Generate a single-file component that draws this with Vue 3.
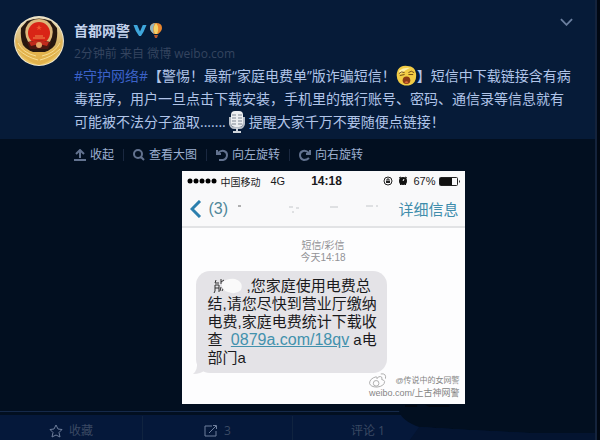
<template>
  <div class="card">
    <header class="post">
      <a href="#" class="avatar" aria-label="首都网警">
        <svg viewBox="0 0 50 50">
          <defs>
            <linearGradient id="gold" x1="0" y1="0" x2="0" y2="1">
              <stop offset="0" stop-color="#e9dfc0" />
              <stop offset="0.55" stop-color="#d9b566" />
              <stop offset="1" stop-color="#f0c860" />
            </linearGradient>
          </defs>
          <circle cx="25" cy="25" r="25" fill="#f1e8cf" />
          <circle cx="25" cy="25" r="24" fill="url(#gold)" />
          <path d="M7 12 L13 5 Q25 0 37 5 L43 12 Q44 22 41 29 Q36 36 25 37 Q14 36 9 29 Q6 22 7 12Z" fill="#26170f" />
          <path d="M2 22 Q5 33 18 36 H32 Q45 33 48 22 Q48 42 25 49 Q2 42 2 22Z" fill="#e2b24c" />
          <path d="M4 27 Q9 37 22 40 M4 33 Q12 41 24 44 M46 27 Q41 37 28 40 M46 33 Q38 41 26 44" fill="none" stroke="#f7de93" stroke-width="1" />
          <path d="M17 5 Q25 1 33 5 Q41 11 38 21 L35 28 H15 L12 21 Q9 11 17 5Z" fill="#dcb77b" />
          <circle cx="25" cy="17" r="11" fill="#d92416" />
          <path d="M25 9 L26 11 H28 L26 12 L27 14 L25 13 L23 14 L24 12 L22 11 H24Z" fill="#f0552e" />
          <path d="M19 22 H31 M21 20 H29" stroke="#ef8a4e" stroke-width="1" />
          <path d="M13 26 Q25 23 37 26 L34 33 H16Z" fill="#4a1710" />
          <path d="M15 26 Q25 23 35 26 L33 30 Q25 27 17 30Z" fill="#c02a1c" />
          <circle cx="25" cy="29" r="3" fill="#e2a668" />
        </svg>
      </a>
      <div class="body">
        <div class="name-row">
          <a href="#" class="name">首都网警</a>
          <svg class="verified" viewBox="0 0 14 14"><path d="M0 1 H4 L7 8 L10 1 H14 Q11 9 8 13 H6 Q2 8 0 1Z" fill="#3fa7dc" /></svg>
          <svg class="balloon" viewBox="0 0 12 15">
            <path d="M6 0 Q12 0 12 5 Q12 8 8 11 H4 Q0 8 0 5 Q0 0 6 0Z" fill="#e8862e" />
            <path d="M5 0 Q0 1 0 5 Q0 8 4 11 Q2 5 5 0Z" fill="#8fb6c4" />
            <path d="M6 0 Q2 5 5 11 H7 Q10 5 6 0Z" fill="#f4d267" />
            <path d="M4 12 H8 L7 15 H5Z" fill="#b5552c" />
          </svg>
          <button type="button" class="menu" aria-label="更多">
            <svg viewBox="0 0 14 8"><path d="M1 1 L7 7 L13 1" fill="none" stroke="#6b7f9f" stroke-width="2" /></svg>
          </button>
        </div>
        <p class="meta">
          <span>2分钟前</span> <span>来自</span> <a href="#">微博 weibo.com</a>
        </p>
        <p class="text">
          <span class="line"><a href="#" class="topic">#守护网络#</a>【警惕！最新“家庭电费单”版诈骗短信！<svg class="emoji" viewBox="0 0 22 22">
            <path d="M2 5 Q5 0 12 1 Q20 1 21 9 Q22 18 15 21 Q8 23 3 18 Q-1 12 2 5Z" fill="#f2cc45" />
            <path d="M3 6 Q8 2 15 3 Q10 5 4 10Z" fill="#fff0a4" />
            <path d="M3 9 Q6 6 9 8 M13 8 Q16 5 19 8 M4 11 L9 10 M13 10 L18 10" fill="none" stroke="#6d4716" stroke-width="1" />
            <ellipse cx="11" cy="16" rx="4" ry="4" fill="#8b3a16" />
            <path d="M9 18 Q11 16 13 18 Q11 20 9 18Z" fill="#dc6a3a" />
          </svg>】短信中下载链接含有病</span>
          <span class="line">毒程序，用户一旦点击下载安装，手机里的银行账号、密码、通信录等信息就有</span>
          <span class="line">可能被不法分子盗取.......<svg class="mic" viewBox="0 0 16 22">
            <path d="M1 6 V13 Q2 17 5 17 H11 Q14 17 15 13 V6" fill="none" stroke="#b6bdc6" stroke-width="2" />
            <rect x="2" y="0" width="12" height="16" rx="4" fill="#eceef0" />
            <path d="M3 4 H7 M3 7 H7 M3 10 H7 M3 13 H7 M9 4 H13 M9 7 H13 M9 10 H13 M9 13 H13" stroke="#7d8692" stroke-width="1" />
            <path d="M8 17 V21 M4 21 H12" stroke="#cfd4da" stroke-width="2" />
          </svg>提醒大家千万不要随便点链接！</span>
        </p>
      </div>
    </header>

    <main class="media">
      <nav class="tools">
        <button v-for="t in tools" :key="t.label" type="button">
          <svg viewBox="0 0 12 12"><path :d="t.icon" /></svg>{{ t.label }}
        </button>
      </nav>

      <section class="phone">
        <div class="status">
          <svg class="signal" viewBox="0 0 30 6">
            <circle v-for="n in 5" :key="n" :cx="n * 6 - 3" cy="3" r="2.500" />
          </svg>
          <span class="carrier">中国移动</span>
          <span class="net">4G</span>
          <b class="clock">14:18</b>
          <svg class="lock" viewBox="0 0 10 10">
            <circle cx="5" cy="5" r="4" fill="none" stroke="#222" />
            <rect x="3" y="5" width="4" height="2" fill="#222" />
            <path d="M4 5 V3 H6 V5" fill="none" stroke="#222" stroke-width="1" />
          </svg>
          <svg class="alarm" viewBox="0 0 10 10">
            <circle cx="5" cy="5" r="4" fill="#111" />
            <path d="M1 2 L3 1 M9 2 L7 1 M2 9 L3 8 M8 9 L7 8" stroke="#111" stroke-width="1" />
            <path d="M5 5 L6 3" stroke="#fff" stroke-width="1" />
          </svg>
          <span class="percent">67%</span>
          <svg class="battery" viewBox="0 0 22 9">
            <rect x="0.500" y="0.500" width="18" height="8" rx="1" fill="none" stroke="#222" />
            <rect x="1" y="1" width="12" height="7" fill="#111" />
            <path d="M20 3 Q22 4.500 20 6Z" fill="#222" />
          </svg>
        </div>
        <div class="navbar">
          <a href="#" class="back">
            <svg viewBox="0 0 12 18"><path d="M10 1 L2 9 L10 17" fill="none" stroke="#2b7fae" stroke-width="3" /></svg>(3)
          </a>
          <svg class="erased" viewBox="0 0 150 12">
            <path d="M51 4 h4 M58 5 h3 M54 9 h2 M92 4 h8 M128 3 h7 M138 3 h2" stroke="#c4c7ca" stroke-width="1" />
            <path d="M0 3 h3" stroke="#666" stroke-width="1" />
          </svg>
          <a href="#" class="detail">详细信息</a>
        </div>
        <div class="stamp">短信/彩信<br>今天14:18</div>
        <div class="bubble">
          <svg class="smudge" viewBox="0 0 34 16">
            <path d="M3 2 L2 5 H6 M2 7 H6 V14 M2 7 V13 L1 15 M2 10 H6 M8 1 V6 M11 2 L8 4 M8 9 L7 13 M11 9 L9 13" fill="none" stroke="#333" stroke-width="1" />
            <path d="M9 5 Q14 0 22 1 Q31 4 28 12 Q23 17 15 14 Q8 12 9 5Z" fill="#fafafa" />
          </svg>,您家庭使用电费总<br>
          结,请您尽快到营业厅缴纳<br>
          电费,家庭电费统计下载收<br>
          查&nbsp;&nbsp;<a href="#">0879a.com/18qv</a> a电<br>
          部门a
          <svg class="tail" viewBox="0 0 16 14"><path d="M4 0 Q5 9 0 13 Q8 13 12 9 L16 4Z" fill="#e4e3e7" /></svg>
        </div>
        <div class="watermark">
          <svg viewBox="0 0 20 16">
            <path d="M8 4 Q1 6 1 11 Q2 15 9 15 Q17 14 17 9 Q16 7 14 7 Q15 3 11 4 Q9 5 9 6 Q9 4 8 4Z M13 1 Q19 0 18 6" fill="none" stroke="#aaa" />
            <circle cx="8" cy="11" r="3" fill="none" stroke="#aaa" />
          </svg>
          <span>@传说中的女网警</span>
          <span class="site">weibo.com/上古神网警</span>
        </div>
      </section>
    </main>

    <footer class="actions">
      <button type="button">
        <svg viewBox="0 0 14 14"><path d="M7 1 L9 5 L13 5.500 L10 8.500 L11 13 L7 11 L3 13 L4 8.500 L1 5.500 L5 5Z" /></svg>收藏
      </button>
      <button type="button">
        <svg viewBox="0 0 14 14"><path d="M8 2 H1 V12 H12 V7 M5 9 L12 2 M9 1.500 H12.500 V5" /></svg>3
      </button>
      <button type="button">评论 1</button>
      <button type="button" aria-label="赞"></button>
      <svg class="shade" viewBox="0 0 195 36" preserveAspectRatio="none">
        <path d="M0 6 Q3 16 20 22 L70 25 L130 28 L195 28 V0 H4Z" fill="#020f20" />
        <path d="M20 22 L70 25 L130 28 H195 V36 H10Z" fill="#041430" />
        <path d="M6 0 H18 V2 H6Z M26 0 H50 V2 H30Z" fill="#020812" />
      </svg>
    </footer>
  </div>
</template>

<script setup>
const tools = [
  { label: '收起', icon: 'M6 9 V1 M2 5 L6 1 L10 5 M0 11 H12' },
  { label: '查看大图', icon: 'M5 1 A4 4 0 1 0 5 9 A4 4 0 1 0 5 1 M8 8 L11 11' },
  { label: '向左旋转', icon: 'M1 1 V5 H5 M2 4 Q5 1 8 2 Q11 3 11 6 Q11 10 7 11 H3' },
  { label: '向右旋转', icon: 'M11 1 V5 H7 M10 4 Q7 1 4 2 Q1 3 1 6 Q1 10 5 11 Q8 11 10 9' },
];
</script>

<style>
body {
  background: #010813;
}
</style>

<style scoped>
.card {
  display: flex;
  flex-direction: column;
  box-sizing: border-box;
  min-height: 100vh;
  margin-right: 3px;
  border-right: 2px solid #14233c;
  background: #020f20;
  color: #b0c4e8;
  font-family: "Open Sans", "Noto Sans CJK SC", sans-serif;
}

a {
  color: inherit;
  text-decoration: none;
}

button {
  padding: 0;
  border: none;
  background: none;
  color: inherit;
  font: inherit;
  cursor: pointer;
}

svg {
  flex: none;
}

p {
  margin: 0;
}

.post {
  display: flex;
  gap: 10px;
  padding: 16px 20px 6px 14px;
  background: #061b38;
}

.avatar {
  flex: none;
  width: 50px;
  height: 50px;
}

.avatar svg {
  display: block;
}

.body {
  flex: 1;
  min-width: 0;
}

.name-row {
  display: flex;
  align-items: center;
  gap: 3px;
  height: 28px;
}

.name {
  color: #c3d2ec;
  font-size: 14px;
  font-weight: bold;
}

.verified {
  width: 14px;
  height: 13px;
}

.balloon {
  width: 12px;
  height: 15px;
}

.menu {
  margin: 0 2px 16px auto;
}

.menu svg {
  display: block;
  width: 13px;
  height: 8px;
}

.meta {
  color: #34445f;
  font-size: 12px;
  line-height: 20px;
}

.text {
  font-size: 14px;
  line-height: 23px;
}

.line {
  display: block;
  height: 23px;
  white-space: nowrap;
}

.topic {
  color: #3c62c8;
}

.emoji {
  width: 21px;
  height: 21px;
  vertical-align: -5px;
}

.mic {
  width: 16px;
  height: 22px;
  margin: 0 4px 0 3px;
  vertical-align: -6px;
}

.media {
  flex: 1;
  padding-bottom: 7px;
}

.tools {
  display: flex;
  padding: 5px 0 5px 64px;
  font-size: 12px;
  line-height: 22px;
}

.tools button {
  display: flex;
  align-items: center;
  gap: 4px;
  height: 22px;
  padding: 0 9px 0 10px;
  color: #9db0d0;
}

.tools button + button {
  background: linear-gradient(#1a2840, #1a2840) left center / 1px 12px no-repeat;
}

.tools svg {
  width: 12px;
  height: 12px;
  fill: none;
  stroke: #62728f;
  stroke-width: 2;
}

.phone {
  box-sizing: border-box;
  width: 283px;
  max-width: 100%;
  margin: 0 calc(50% - 167px) 0 auto;
  padding-bottom: 6px;
  background: #fdfdfe;
  color: #1a1a1c;
}

.status {
  display: flex;
  align-items: center;
  height: 20px;
  padding: 0 4px 0 5px;
  background: #f9f9fa;
  font-family: "Liberation Sans", "Noto Sans CJK SC", sans-serif;
  font-size: 11px;
}

.signal {
  width: 30px;
  height: 6px;
  margin-right: 4px;
}

.carrier {
  font-size: 10px;
}

.net {
  margin-left: 10px;
}

.clock {
  margin: 0 auto 0 26px;
  font-size: 12px;
}

.lock,
.alarm {
  width: 10px;
  height: 10px;
  margin-right: 5px;
}

.percent {
  margin-right: 3px;
}

.battery {
  width: 22px;
  height: 9px;
}

.navbar {
  display: flex;
  align-items: center;
  justify-content: space-between;
  height: 35px;
  padding: 0 6px 0 8px;
  border-bottom: 2px solid #e2e3e5;
  background: #f9f9fa;
  font-family: "Liberation Sans", "Noto Sans CJK SC", sans-serif;
}

.back {
  display: flex;
  align-items: center;
  gap: 7px;
  color: #4f8799;
  font-size: 16px;
}

.back svg {
  width: 12px;
  height: 18px;
}

.erased {
  width: 150px;
  height: 12px;
}

.detail {
  color: #3f8dac;
  font-size: 15px;
}

.stamp {
  padding: 12px 0 7px;
  color: #929296;
  font-family: "Liberation Sans", "Noto Sans CJK SC", sans-serif;
  font-size: 10px;
  line-height: 12px;
  text-align: center;
}

.bubble {
  position: relative;
  box-sizing: border-box;
  width: 191px;
  margin-left: 14px;
  padding: 6px 0 6px 12px;
  border-radius: 14px;
  background: #e4e3e7;
  font-family: "Liberation Sans", "Noto Sans CJK SC", sans-serif;
  font-size: 15px;
  line-height: 18px;
  white-space: nowrap;
}

.bubble a {
  color: #4291ad;
  font-size: 16px;
  text-decoration: underline;
}

.smudge {
  width: 34px;
  height: 16px;
  margin-left: 5px;
  vertical-align: -3px;
}

.tail {
  position: absolute;
  left: -3px;
  bottom: -2px;
  width: 16px;
  height: 14px;
}

.watermark {
  display: grid;
  grid-template-columns: 20px auto;
  justify-content: end;
  align-items: center;
  column-gap: 7px;
  padding-right: 5px;
  color: #858585;
  font-family: "Liberation Sans", "Noto Sans CJK SC", sans-serif;
  font-size: 8px;
  line-height: 10px;
}

.watermark svg {
  width: 20px;
  height: 15px;
}

.site {
  grid-column: 1 / 3;
  justify-self: end;
  font-size: 9px;
}

.actions {
  position: relative;
  display: grid;
  grid-template-columns: 143fr 150fr 150fr 152fr;
  padding-top: 4px;
  border-top: 1px solid #15294a;
  background: linear-gradient(#020f20 3px, #05183a 3px);
}

.actions button {
  display: flex;
  align-items: center;
  justify-content: center;
  gap: 6px;
  height: 24px;
  padding-top: 6px;
  border-right: 1px solid #10233f;
  color: #3a4963;
  font-size: 12px;
  line-height: 16px;
}

.actions button:nth-child(n + 3) {
  border-right: none;
}

.actions button svg {
  width: 14px;
  height: 14px;
  fill: none;
  stroke: #6f7f9c;
  stroke-width: 1;
}

.shade {
  position: absolute;
  right: 0;
  top: -7px;
  width: 33%;
  height: 36px;
}
</style>
